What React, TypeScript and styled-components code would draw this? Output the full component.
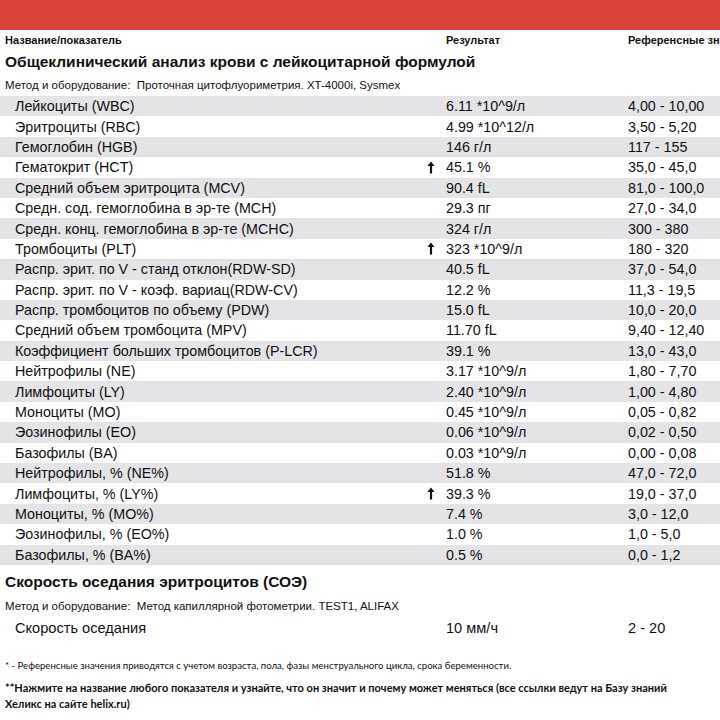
import React from "react";
import styled, { createGlobalStyle } from "styled-components";

const Global = createGlobalStyle`
  html, body { margin: 0; padding: 0; background: #fff; }
  body { font-family: "Liberation Sans", Arial, sans-serif; color: #111; }
`;

const Page = styled.div`
  width: 720px;
  height: 720px;
  overflow: hidden;
  background: #fff;
`;

const RedBar = styled.div`
  height: 30px;
  background: #d9443a;
`;

const Grid = styled.div`
  display: grid;
  grid-template-columns: 425px 21px 182px 1fr;
  align-items: center;
  white-space: nowrap;
`;

const HeaderRow = styled(Grid)`
  height: 20px;
  font-size: 11px;
  font-weight: bold;
  padding-left: 5px;
  grid-template-columns: 420px 21px 182px 1fr;
  overflow: hidden;
`;

const SectionTitle = styled.div<{ $h: number }>`
  height: ${(p) => p.$h}px;
  display: flex;
  align-items: center;
  padding-left: 5px;
  font-size: 15.5px;
  font-weight: bold;
`;

const Method = styled.div<{ $h: number }>`
  height: ${(p) => p.$h}px;
  display: flex;
  align-items: center;
  padding-left: 5px;
  font-size: 11.5px;
  white-space: pre;
`;

const Row = styled(Grid)<{ $alt: boolean; $h?: number; $fs?: number }>`
  height: ${(p) => p.$h ?? 20.4}px;
  background: ${(p) => (p.$alt ? "#e4e3e6" : "#fff")};
  font-size: ${(p) => p.$fs ?? 14.3}px;
`;

const NameCell = styled.div`
  padding-left: 15px;
`;

const ArrowCell = styled.div`
  display: flex;
  align-items: center;
  padding-left: 2px;
`;

const Cell = styled.div``;

const Note = styled.div`
  font-family: Lato, "Open Sans", sans-serif;
  font-size: 9.6px;
  padding-left: 5px;
  height: 22px;
  margin-top: 12px;
  display: flex;
  align-items: center;
`;

const BoldNote = styled.div`
  font-family: Lato, "Open Sans", sans-serif;
  font-size: 11px;
  font-weight: bold;
  padding-left: 5px;
  line-height: 16.5px;
  padding-top: 3px;
  width: 680px;
`;

const UpArrow = () => (
  <svg width="8" height="13" viewBox="0 0 8 13">
    <path d="M4 0.5 L7.5 5 L5.1 5 L5.1 12.5 L2.9 12.5 L2.9 5 L0.5 5 Z" fill="#111" />
  </svg>
);

type R = [string, string, string, boolean?];

const rows: R[] = [
  ["Лейкоциты (WBC)", "6.11 *10^9/л", "4,00 - 10,00"],
  ["Эритроциты (RBC)", "4.99 *10^12/л", "3,50 - 5,20"],
  ["Гемоглобин (HGB)", "146 г/л", "117 - 155"],
  ["Гематокрит (HCT)", "45.1 %", "35,0 - 45,0", true],
  ["Средний объем эритроцита (MCV)", "90.4 fL", "81,0 - 100,0"],
  ["Средн. сод. гемоглобина в эр-те (MCH)", "29.3 пг", "27,0 - 34,0"],
  ["Средн. конц. гемоглобина в эр-те (MCHC)", "324 г/л", "300 - 380"],
  ["Тромбоциты (PLT)", "323 *10^9/л", "180 - 320", true],
  ["Распр. эрит. по V - станд отклон(RDW-SD)", "40.5 fL", "37,0 - 54,0"],
  ["Распр. эрит. по V - коэф. вариац(RDW-CV)", "12.2 %", "11,3 - 19,5"],
  ["Распр. тромбоцитов по объему (PDW)", "15.0 fL", "10,0 - 20,0"],
  ["Средний объем тромбоцита (MPV)", "11.70 fL", "9,40 - 12,40"],
  ["Коэффициент больших тромбоцитов (P-LCR)", "39.1 %", "13,0 - 43,0"],
  ["Нейтрофилы (NE)", "3.17 *10^9/л", "1,80 - 7,70"],
  ["Лимфоциты (LY)", "2.40 *10^9/л", "1,00 - 4,80"],
  ["Моноциты (MO)", "0.45 *10^9/л", "0,05 - 0,82"],
  ["Эозинофилы (EO)", "0.06 *10^9/л", "0,02 - 0,50"],
  ["Базофилы (BA)", "0.03 *10^9/л", "0,00 - 0,08"],
  ["Нейтрофилы, % (NE%)", "51.8 %", "47,0 - 72,0"],
  ["Лимфоциты, % (LY%)", "39.3 %", "19,0 - 37,0", true],
  ["Моноциты, % (MO%)", "7.4 %", "3,0 - 12,0"],
  ["Эозинофилы, % (EO%)", "1.0 %", "1,0 - 5,0"],
  ["Базофилы, % (BA%)", "0.5 %", "0,0 - 1,2"],
];

export default function App() {
  return (
    <Page>
      <Global />
      <RedBar />
      <HeaderRow>
        <Cell>Название/показатель</Cell>
        <Cell />
        <Cell>Результат</Cell>
        <Cell>Референсные значения</Cell>
      </HeaderRow>
      <SectionTitle $h={23}>Общеклинический анализ крови с лейкоцитарной формулой</SectionTitle>
      <Method $h={23}>Метод и оборудование:  Проточная цитофлуориметрия. XT-4000i, Sysmex</Method>
      {rows.map(([n, v, r, up], i) => (
        <Row key={n} $alt={i % 2 === 0}>
          <NameCell>{n}</NameCell>
          <ArrowCell>{up ? <UpArrow /> : null}</ArrowCell>
          <Cell>{v}</Cell>
          <Cell>{r}</Cell>
        </Row>
      ))}
      <SectionTitle $h={34}>Скорость оседания эритроцитов (СОЭ)</SectionTitle>
      <Method $h={14}>Метод и оборудование:  Метод капиллярной фотометрии. TEST1, ALIFAX</Method>
      <Row $alt={false} $h={30} $fs={14.6}>
        <NameCell>Скорость оседания</NameCell>
        <ArrowCell />
        <Cell>10 мм/ч</Cell>
        <Cell>2 - 20</Cell>
      </Row>
      <Note>* - Референсные значения приводятся с учетом возраста, пола, фазы менструального цикла, срока беременности.</Note>
      <BoldNote>
        **Нажмите на название любого показателя и узнайте, что он значит и почему может меняться (все ссылки ведут на Базу знаний Хеликс на сайте helix.ru)
      </BoldNote>
    </Page>
  );
}
